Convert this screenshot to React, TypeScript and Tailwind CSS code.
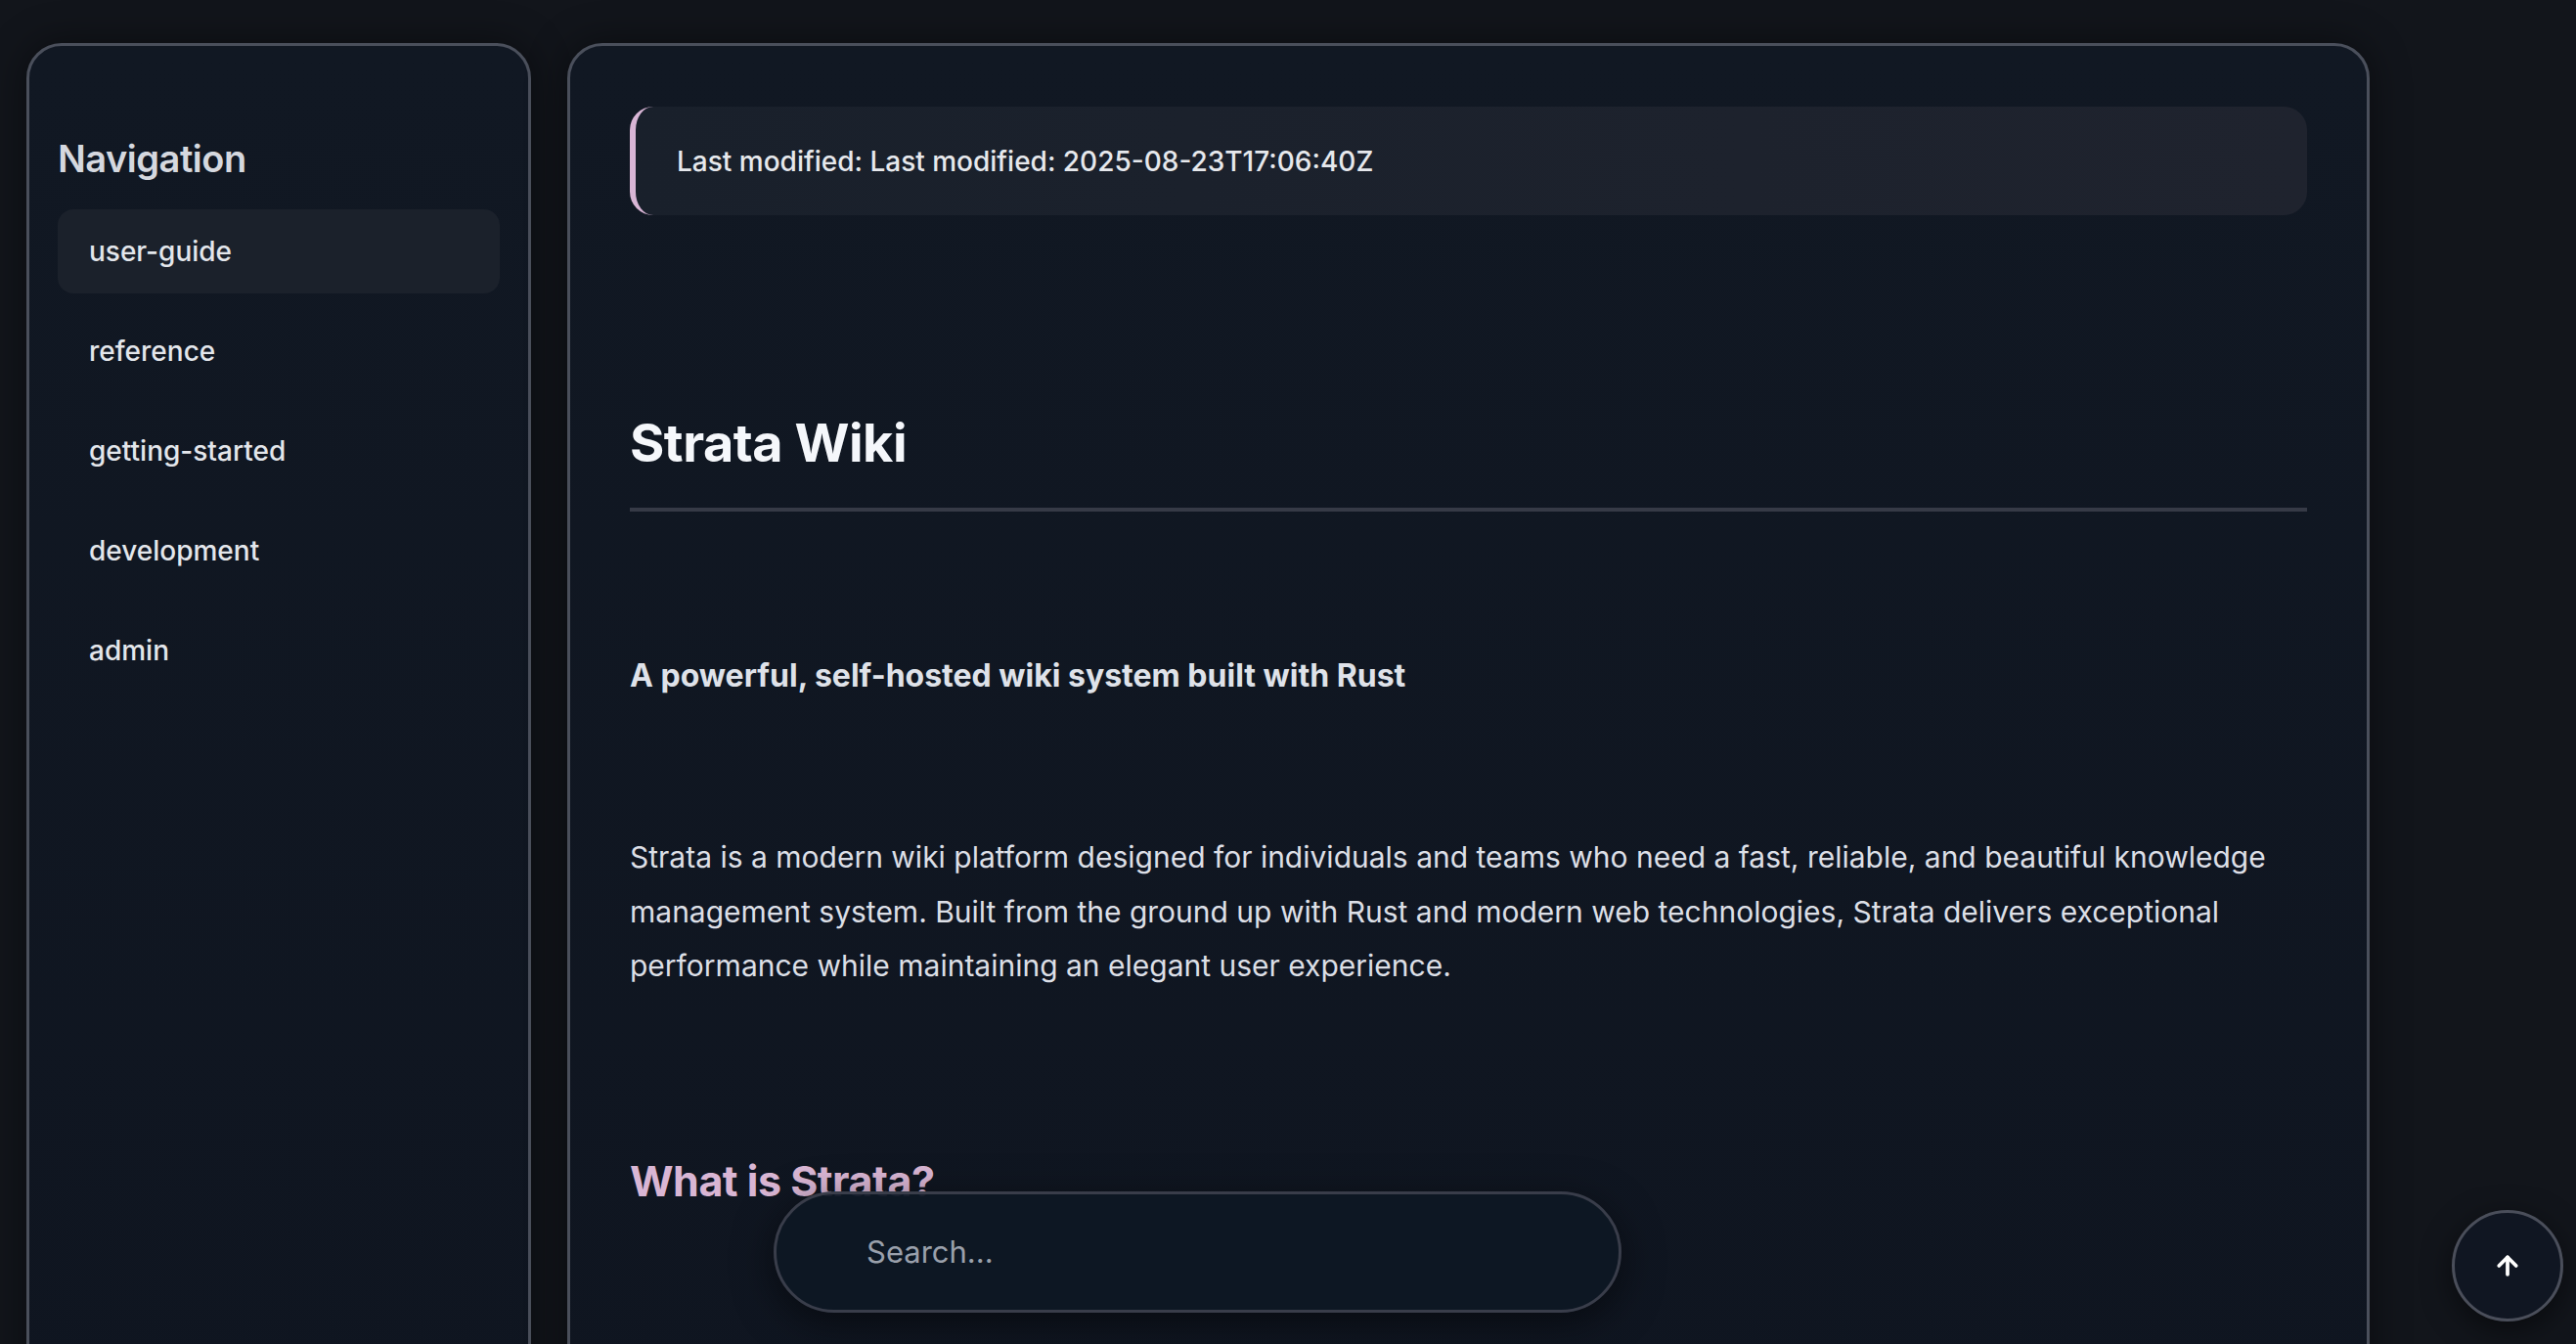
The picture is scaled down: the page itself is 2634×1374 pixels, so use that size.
import React from 'react';
import { ArrowUp } from 'lucide-react';

const navItems = ['user-guide', 'reference', 'getting-started', 'development', 'admin'];

function Sidebar() {
  return (
    <aside className="w-[516px] shrink-0 min-h-[1500px] rounded-t-[36px] border-[3px] border-[#4a4f5b] bg-gradient-to-b from-[#111823] to-[#0f1520] px-[29px] pt-[91px] shadow-[0_0_40px_rgba(0,0,0,0.45)]">
      <h2 className="text-[38px] leading-[48px] font-semibold text-[#d5d8df] tracking-[-0.5px]">Navigation</h2>
      <nav className="mt-[28px] flex flex-col gap-[16px]">
        {navItems.map((item, i) => (
          <a
            key={item}
            className={`flex h-[86px] items-center rounded-[16px] px-[32px] text-[28px] font-medium text-[#e3e6eb] ${
              i === 0 ? 'bg-[#1b212b]' : ''
            }`}
          >
            {item}
          </a>
        ))}
      </nav>
    </aside>
  );
}

function Content() {
  return (
    <main className="w-[1843px] shrink-0 min-h-[1500px] rounded-t-[36px] border-[3px] border-[#4a4f5b] bg-gradient-to-b from-[#111823] to-[#0f1520] px-[61px] pt-[62px] shadow-[0_0_40px_rgba(0,0,0,0.45)]">
      <div className="flex h-[111px] items-center rounded-[24px] border-l-[6px] border-[#d9b6d6] bg-gradient-to-r from-[#19202b] to-[#1f232e] pl-[42px]">
        <p className="text-[28px] font-medium text-[#e6e8ec]">Last modified: Last modified: 2025-08-23T17:06:40Z</p>
      </div>

      <h1 className="mt-[201px] text-[54px] leading-[64px] font-bold text-[#f5f7fb] tracking-[-0.5px]">Strata Wiki</h1>
      <div className="mt-[34px] h-[4px] bg-[#363a46]" />

      <p className="mt-[144px] text-[32px] leading-[48px] font-bold text-[#dfe2e9]">
        A powerful, self-hosted wiki system built with Rust
      </p>

      <p className="mt-[134px] text-[30px] leading-[55.6px] text-[#dcdfe6]">
        Strata is a modern wiki platform designed for individuals and teams who need a fast, reliable, and beautiful
        knowledge management system. Built from the ground up with Rust and modern web technologies, Strata delivers
        exceptional performance while maintaining an elegant user experience.
      </p>

      <h2 className="mt-[163px] text-[43px] leading-[56px] font-bold text-[#d9b6d4] tracking-[-0.5px]">What is Strata?</h2>
    </main>
  );
}

export default function App() {
  return (
    <div
      className="relative h-screen overflow-hidden bg-[#12151b]"
      style={{ fontFamily: 'Inter, "Noto Sans", sans-serif' }}
    >
      <div className="flex gap-[37px] pl-[27px] pt-[44px]">
        <Sidebar />
        <Content />
      </div>

      <div className="absolute left-[791px] bottom-[32px] flex h-[124px] w-[867px] items-center rounded-full border-[3px] border-[#393d4a] bg-[#0e1724]/95 pl-[92px] shadow-[0_10px_40px_rgba(0,0,0,0.5)]">
        <input
          className="w-full bg-transparent text-[31px] text-[#e5e7eb] outline-none placeholder:text-[#9aa0ab]"
          placeholder="Search..."
        />
      </div>

      <button className="absolute right-[13px] bottom-[23px] flex h-[114px] w-[114px] items-center justify-center rounded-full border-[3px] border-[#4a4e5a] bg-[#101622] shadow-[0_8px_30px_rgba(0,0,0,0.5)]">
        <ArrowUp className="h-[30px] w-[30px] text-white" strokeWidth={3} />
      </button>
    </div>
  );
}
